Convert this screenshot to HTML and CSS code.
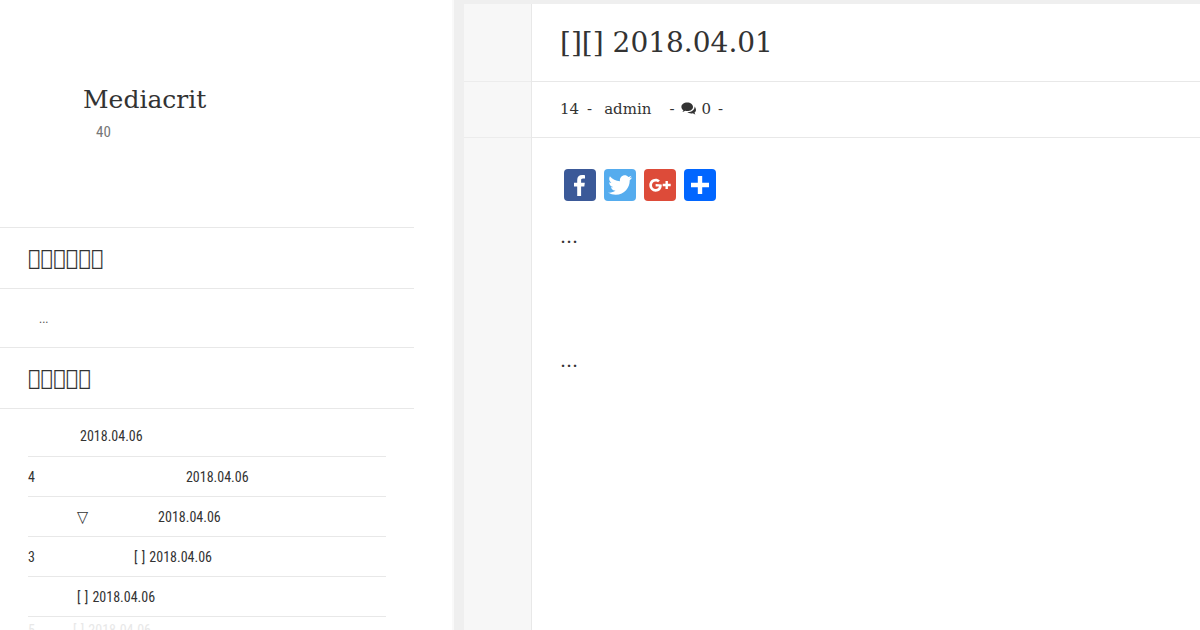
FILE: index.html
```html
<!DOCTYPE html>
<html lang="en">
<head>
  <meta charset="UTF-8">
  <title>Mediacrit</title>
  <link rel="stylesheet" href="styles.css">
</head>
<body>
  <div class="page">
    <aside class="sidebar">
      <div class="brand">
        <div class="brand-name">Mediacrit</div>
        <div class="brand-sub">40</div>
      </div>

      <h3 class="widget-title">&#xE101;&#xE102;&#xE103;&#xE104;&#xE105;&#xE106;</h3>
      <div class="widget-text">...</div>

      <h3 class="widget-title">&#xE107;&#xE108;&#xE109;&#xE10A;&#xE10B;</h3>
      <ul class="recent">
        <li class="row row-first"><span class="gap-52"></span>2018.04.06</li>
        <li class="row">4<span class="gap-151"></span>2018.04.06</li>
        <li class="row"><span class="gap-49"></span><span class="tri">▽</span><span class="gap-70"></span>2018.04.06</li>
        <li class="row">3<span class="gap-99"></span>[ ] 2018.04.06</li>
        <li class="row"><span class="gap-49"></span>[ ] 2018.04.06</li>
        <li class="row row-faded">5<span class="gap-38"></span>[ ] 2018.04.06</li>
      </ul>
    </aside>

    <main class="main">
      <div class="rail">
        <div class="rail-title"></div>
        <div class="rail-meta"></div>
      </div>
      <article class="post">
        <h1 class="post-title">[][] 2018.04.01</h1>
        <div class="post-meta">
          <span>14</span>
          <span class="m-8">-</span>
          <span class="m-12">admin</span>
          <span class="m-18">-</span>
          <svg class="comment-icon m-7" viewBox="0 0 16 14"><path d="M6.2 0.6C2.900 0.6 0.4 2.500 0.4 4.900c0 1.300 0.8 2.500 2 3.300-0.2 0.7-0.6 1.300-1.100 1.800 1.100-0.2 2.100-0.6 2.900-1.200 0.6 0.2 1.300 0.3 2 0.3 3.300 0 5.800-1.900 5.800-4.200S9.500 0.6 6.200 0.6z"/><path d="M13.400 3.900c0.2 0.4 0.2 0.7 0.2 1.100 0 2.900-2.900 5-6.400 5.100-0.3 0-0.6 0-0.9 0 0.9 0.9 2.300 1.400 3.900 1.400 0.6 0 1.100-0.1 1.700-0.2 0.7 0.5 1.500 0.9 2.500 1.100-0.4-0.5-0.8-1-1-1.600 1-0.7 1.600-1.700 1.600-2.800 0-1.600-1-3-1.600-4.100z"/></svg>
          <span class="m-4">0</span>
          <span class="m-7">-</span>
        </div>
        <div class="post-body">
          <div class="share">
            <a class="share-btn fb"><svg viewBox="0 0 32 32"><path d="M17.100 27V17.600h3.200l.5-3.800h-3.700v-2.400c0-1.100.3-1.800 1.900-1.800h2V6.200c-.3 0-1.500-.2-2.900-.2-2.900 0-4.900 1.800-4.900 5v2.800H10v3.800h3.200V27z"/></svg></a>
            <a class="share-btn tw"><svg viewBox="0 0 32 32"><path d="M28 8.600c-.9.4-1.800.7-2.800.8 1-.6 1.800-1.600 2.200-2.700-.9.6-2 1-3.100 1.200C23.400 6.900 22.100 6.300 20.800 6.300c-2.700 0-4.900 2.200-4.900 4.900 0 .4 0 .8.1 1.100C11.900 12.100 8.300 10.100 5.900 7.200c-.4.7-.7 1.600-.7 2.500 0 1.700.9 3.200 2.200 4.100-.8 0-1.600-.2-2.200-.6v.1c0 2.400 1.700 4.400 3.900 4.800-.4.1-.8.2-1.300.2-.3 0-.6 0-.9-.1.6 2 2.400 3.400 4.600 3.400-1.700 1.300-3.800 2.100-6.100 2.100-.4 0-.8 0-1.200-.1 2.200 1.400 4.800 2.200 7.500 2.200 9 0 14-7.500 14-14v-.6c1-.7 1.800-1.600 2.400-2.600z"/></svg></a>
            <a class="share-btn gp"><svg viewBox="0 0 32 32"><path transform="translate(2.200 3.200) scale(.8)" d="M11.800 14.900v2.900h4.200c-.2 1.100-1.300 3.200-4.200 3.200-2.500 0-4.600-2.100-4.600-4.700s2.100-4.700 4.600-4.700c1.400 0 2.400.6 3 1.100l2.300-2.200c-1.500-1.400-3.300-2.200-5.300-2.200-4.400 0-7.900 3.500-7.900 8s3.500 8 7.900 8c4.600 0 7.600-3.200 7.600-7.700 0-.5-.1-.9-.1-1.300z"/><path d="M21.500 12v2.800h-2.800v2.400h2.800V20h2.400v-2.800h2.800v-2.400h-2.800V12z"/></svg></a>
            <a class="share-btn add"><svg viewBox="0 0 32 32"><path d="M13.800 7h4.400v6.800H25v4.400h-6.800V25h-4.400v-6.800H7v-4.400h6.800z"/></svg></a>
          </div>
          <p class="dots">...</p>
          <p class="dots dots-last">...</p>
        </div>
      </article>
    </main>
  </div>
</body>
</html>
```

FILE: styles.css
```css
html, body {
  margin: 0;
  padding: 0;
  height: 630px;
  overflow: hidden;
}
body {
  background: #fff;
  color: #333;
  font-family: "DejaVu Serif", serif;
}
.page {
  display: flex;
  height: 630px;
  overflow: hidden;
}

/* sidebar */
.sidebar {
  width: 414px;
  margin-right: 38px;
  flex: none;
}
.brand {
  height: 228px;
  box-sizing: border-box;
  padding: 85px 0 0 83px;
  border-bottom: 1px solid #e8e8e8;
}
.brand-name {
  font-size: 25px;
  line-height: 30px;
}
.brand-sub {
  margin: 7px 0 0 13px;
  font-family: "Roboto", sans-serif;
  font-stretch: 75%;
  font-size: 15px;
  line-height: 20px;
  color: #777;
}
.widget-title {
  margin: 0;
  height: 61px;
  box-sizing: border-box;
  padding: 0 28px;
  border-bottom: 1px solid #e8e8e8;
  font-size: 21px;
  font-weight: normal;
  line-height: 60px;
}
.widget-text {
  height: 59px;
  box-sizing: border-box;
  padding: 20px 0 0 39px;
  border-bottom: 1px solid #e8e8e8;
  font-family: "Roboto", sans-serif;
  font-stretch: 75%;
  font-size: 12px;
  line-height: 20px;
  color: #555;
}
.recent {
  list-style: none;
  margin: 0 28px;
  padding: 6px 0 0;
}
.row {
  display: flex;
  align-items: center;
  height: 39px;
  border-bottom: 1px solid #e8e8e8;
  font-family: "Roboto", sans-serif;
  font-stretch: 75%;
  font-size: 14px;
  word-spacing: 1px;
  white-space: pre;
}
.row-first {
  height: 41px;
}
.row-faded {
  height: 26px;
  border-bottom: none;
  color: #e8e8e8;
}
.tri {
  font-family: "DejaVu Sans", sans-serif;
  font-size: 16px;
}
.gap-38 { width: 38px; }
.gap-49 { width: 49px; }
.gap-52 { width: 52px; }
.gap-70 { width: 70px; }
.gap-99 { width: 99px; }
.gap-151 { width: 151px; }

/* main column */
.main {
  flex: 1;
  display: flex;
  background: #efefef;
  border-left: 2px solid #f9f9f9;
  padding: 4px 0 0 10px;
  min-width: 0;
}
.rail {
  width: 67px;
  flex: none;
  background: #f7f7f7;
  border-right: 1px solid #e8e8e8;
}
.rail-title {
  height: 78px;
  box-sizing: border-box;
  border-bottom: 1px solid #ececec;
}
.rail-meta {
  height: 56px;
  box-sizing: border-box;
  border-bottom: 1px solid #ececec;
}
.post {
  flex: 1;
  background: #fff;
}
.post-title {
  margin: 0;
  height: 78px;
  box-sizing: border-box;
  padding-left: 28px;
  border-bottom: 1px solid #e8e8e8;
  font-size: 28px;
  font-weight: normal;
  line-height: 78px;
}
.post-meta {
  display: flex;
  align-items: center;
  height: 56px;
  box-sizing: border-box;
  padding: 0 0 2px 28px;
  border-bottom: 1px solid #e8e8e8;
  font-size: 15px;
}
.m-4 { margin-left: 4px; }
.m-7 { margin-left: 7px; }
.m-8 { margin-left: 8px; }
.m-12 { margin-left: 12px; }
.m-18 { margin-left: 18px; }
.comment-icon {
  width: 16px;
  height: 14px;
  fill: #333;
}
.post-body {
  padding: 31px 28px 0;
}
.share {
  display: flex;
  gap: 8px;
  padding-left: 4px;
}
.share-btn {
  display: block;
  width: 32px;
  height: 32px;
  border-radius: 4px;
}
.share-btn svg {
  display: block;
  fill: #fff;
}
.fb { background: #3b5998; }
.tw { background: #55acee; }
.gp { background: #dd4b39; }
.add { background: #0166ff; }
.dots {
  margin: 21px 0 0;
  font-size: 19px;
  line-height: 28px;
}
.dots-last {
  margin-top: 96px;
}
```
